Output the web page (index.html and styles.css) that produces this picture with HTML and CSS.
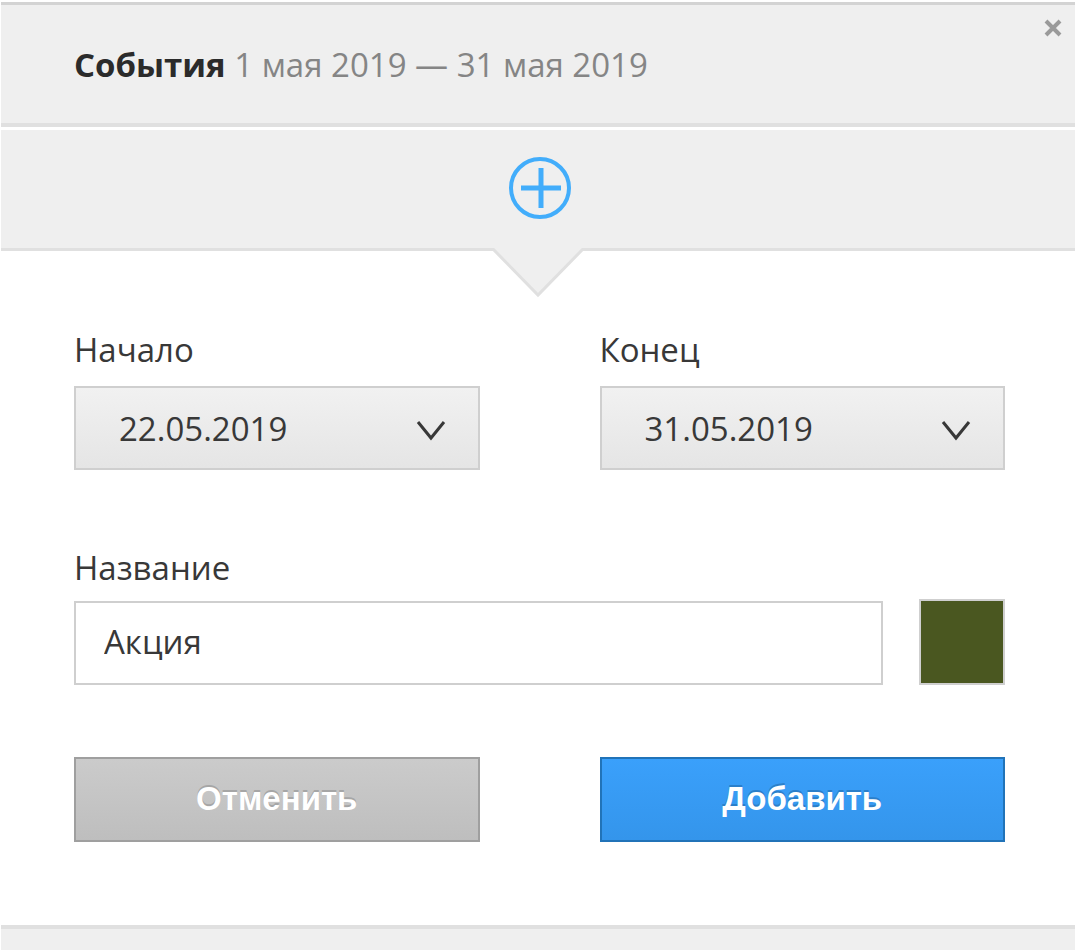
FILE: index.html
```
<!DOCTYPE html>
<html lang="ru">
<head>
    <meta charset="UTF-8">
    <meta name="viewport" content="width=device-width, initial-scale=1.0">
    <title>События</title>
    <link rel="stylesheet" href="styles.css">
</head>
<body>
    <div class="popup">
        <header class="header">
            <h1 class="title"><strong>События</strong> 1 мая 2019 — 31 мая 2019</h1>
            <button type="button" class="close" aria-label="Закрыть">
                <svg width="18" height="18" viewBox="0 0 18 18" fill="none" stroke="#9a9a9a" stroke-width="4">
                    <path d="M2 2L16 16M16 2L2 16"/>
                </svg>
            </button>
        </header>

        <div class="add-bar">
            <button type="button" class="add" aria-label="Новое событие">
                <svg width="64" height="64" viewBox="0 0 64 64" fill="none" stroke="#42adfb">
                    <circle cx="32" cy="32" r="29" stroke-width="4"/>
                    <path d="M33 12V52M13 32H53" stroke-width="5"/>
                </svg>
            </button>
            <svg class="arrow" width="94" height="51" viewBox="0 0 94 51">
                <path d="M0 0H94L91 3L47 48L3 3Z" fill="#efefef"/>
                <path d="M0 1L2 1L47 47L92 1H94" fill="none" stroke="#e0e0e0" stroke-width="3"/>
            </svg>
        </div>

        <form class="form">
            <div class="columns">
                <div class="field">
                    <label for="start">Начало</label>
                    <div class="select">
                        <select id="start">
                            <option>22.05.2019</option>
                        </select>
                        <svg class="chevron" width="30" height="22" viewBox="0 0 30 22" fill="none" stroke="#383838" stroke-width="3">
                            <path d="M2 2L15 18L28 2"/>
                        </svg>
                    </div>
                </div>
                <div class="field">
                    <label for="end">Конец</label>
                    <div class="select">
                        <select id="end">
                            <option>31.05.2019</option>
                        </select>
                        <svg class="chevron" width="30" height="22" viewBox="0 0 30 22" fill="none" stroke="#383838" stroke-width="3">
                            <path d="M2 2L15 18L28 2"/>
                        </svg>
                    </div>
                </div>
            </div>

            <div class="field field-name">
                <label for="name">Название</label>
                <div class="name-row">
                    <input type="text" id="name" class="name" value="Акция">
                    <button type="button" class="color" aria-label="Цвет"></button>
                </div>
            </div>

            <div class="columns">
                <button type="button" class="btn btn-cancel">Отменить</button>
                <button type="submit" class="btn btn-submit">Добавить</button>
            </div>
        </form>

        <div class="bottom"></div>
    </div>
</body>
</html>
```

FILE: styles.css
```
* {
    box-sizing: border-box;
}
body {
    margin: 0;
    background: #fff;
    color: #383838;
    font-family: 'Open Sans', 'Noto Sans', sans-serif;
    font-size: 33px;
    line-height: 44px;
}
button, input, select {
    font: inherit;
    color: inherit;
    margin: 0;
    border-radius: 0;
}
.popup {
    display: flex;
    flex-direction: column;
    min-height: 100vh;
    padding: 2px 0 0 1px;
}
.header {
    position: relative;
    padding: 38px 73px 36px;
    background: #efefef;
    border-top: 3px solid #d3d3d3;
    border-bottom: 4px solid #e0e0e0;
}
.title {
    margin: 0;
    font-size: 33px;
    font-weight: 400;
    color: #858585;
}
.title strong {
    font-weight: 700;
    color: #2b2b2b;
}
.close {
    position: absolute;
    top: 14px;
    right: 13px;
    display: flex;
    padding: 0;
    border: none;
    background: none;
    cursor: pointer;
}
.add-bar {
    position: relative;
    display: flex;
    justify-content: center;
    margin-top: 3px;
    padding: 26px 0 28px 3px;
    background: #efefef;
    border-bottom: 3px solid #e0e0e0;
}
.add {
    display: flex;
    padding: 0;
    border: none;
    background: none;
    cursor: pointer;
}
.arrow {
    position: absolute;
    top: 100%;
    left: 50%;
    transform: translateX(-50%);
}
.form {
    padding: 77px 70px 83px 73px;
}
.columns {
    display: grid;
    grid-template-columns: 1fr 1fr;
    gap: 120px;
}
.field label {
    display: block;
    margin-bottom: 14px;
}
.field-name {
    margin: 76px 0 72px;
}
.field-name label {
    margin-bottom: 9px;
}
.select {
    position: relative;
}
.select select {
    display: block;
    width: 100%;
    height: 84px;
    padding: 2px 80px 0 43px;
    border: 2px solid #cfcfcf;
    background: linear-gradient(#f1f1f1, #e5e5e5);
    appearance: none;
}
.chevron {
    position: absolute;
    top: 34px;
    right: 34px;
    pointer-events: none;
}
.name-row {
    display: flex;
    align-items: flex-end;
    gap: 36px;
}
.name {
    flex: 1;
    min-width: 0;
    height: 84px;
    padding: 0 28px 4px;
    border: 2px solid #cfcfcf;
    background: #fff;
}
.color {
    width: 86px;
    height: 86px;
    border: 2px solid #cfcfcf;
    background: #4a5720;
    cursor: pointer;
}
.btn {
    height: 85px;
    padding: 0 20px 2px;
    border: 2px solid;
    color: #fff;
    font-family: 'Liberation Sans', Arial, sans-serif;
    font-weight: 700;
    cursor: pointer;
}
.btn-cancel {
    border-color: #9f9f9f;
    background: linear-gradient(#cbcbcb, #bebebe);
    text-shadow: 0 -2px 0 #a6a6a6;
}
.btn-submit {
    border-color: #2173b8;
    background: linear-gradient(#3aa0fb, #3495eb);
    text-shadow: 0 -2px 0 #2b7fca;
}
.bottom {
    flex: 1;
    background: #efefef;
    border-top: 4px solid #e0e0e0;
}
```
